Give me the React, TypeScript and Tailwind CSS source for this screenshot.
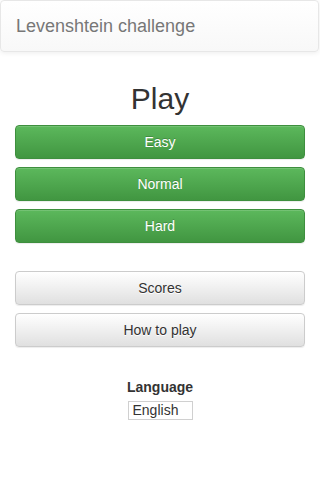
import React from 'react';

const greenBtn =
  'block w-full h-[34px] rounded-[4px] border border-[#3e8f3e] bg-gradient-to-b from-[#5cb85c] to-[#419641] text-[14px] text-white shadow-[inset_0_1px_0_rgba(255,255,255,0.15),0_1px_1px_rgba(0,0,0,0.075)] [text-shadow:0_-1px_0_rgba(0,0,0,0.2)]';

const defaultBtn =
  'block w-full h-[34px] rounded-[4px] border border-[#ccc] bg-gradient-to-b from-[#ffffff] to-[#e0e0e0] text-[14px] text-[#333] shadow-[inset_0_1px_0_rgba(255,255,255,0.15),0_1px_1px_rgba(0,0,0,0.075)] [text-shadow:0_1px_0_#fff]';

export default function App() {
  return (
    <div className="w-[320px] h-[480px] bg-white font-['Liberation_Sans',Arial,sans-serif] text-[14px] text-[#333]">
      {/* Navbar */}
      <nav className="h-[52px] w-[319px] rounded-[4px] border border-[#e7e7e7] bg-gradient-to-b from-[#ffffff] to-[#f8f8f8] shadow-[inset_0_1px_0_rgba(255,255,255,0.15),0_1px_5px_rgba(0,0,0,0.075)] flex items-center px-[15px]">
        <span className="text-[18px] leading-[20px] text-[#777]">Levenshtein challenge</span>
      </nav>

      <div className="px-[15px] pt-[30px]">
        <h2 className="text-center text-[30px] leading-[33px] font-normal text-[#333] mb-[10px]">Play</h2>

        <div className="flex flex-col gap-[8px]">
          <button className={greenBtn}>Easy</button>
          <button className={greenBtn}>Normal</button>
          <button className={greenBtn}>Hard</button>
        </div>

        <div className="flex flex-col gap-[8px] mt-[28px]">
          <button className={defaultBtn}>Scores</button>
          <button className={defaultBtn}>How to play</button>
        </div>

        <div className="mt-[30px] flex flex-col items-center">
          <label className="font-bold text-[14px] leading-[20px] text-[#333]">Language</label>
          <div className="mt-[4px] w-[65px] h-[19px] border border-[#d0d0d0] flex items-center px-[4px] text-[14px] leading-[17px] text-[#333] bg-white">
            English
          </div>
        </div>
      </div>
    </div>
  );
}
